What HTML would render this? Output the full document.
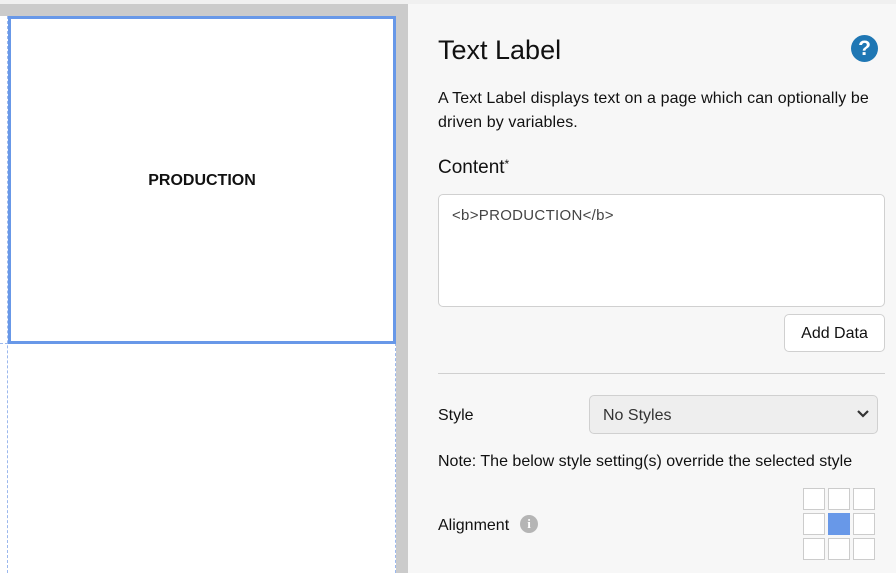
<!DOCTYPE html>
<html><head><style>
*{margin:0;padding:0;box-sizing:border-box}
body{width:896px;height:573px;overflow:hidden;background:#f7f7f7;font-family:"Liberation Sans",sans-serif;color:#111;position:relative}
.a{position:absolute}
</style></head><body>
<div class="a" style="left:0;top:0;width:896px;height:4px;background:#f0f0f0"></div>
<div class="a" style="left:0;top:4px;width:408px;height:569px;background:#cbcbcb"></div>
<div class="a" style="left:0;top:16px;width:396px;height:557px;background:#fff"></div>
<div class="a" style="left:7px;top:16px;width:1px;height:557px;border-left:1px dashed #9bb8ee"></div>
<div class="a" style="left:0;top:343px;width:396px;height:1px;border-top:1px dashed #9bb8ee"></div>
<div class="a" style="left:395px;top:343px;width:1px;height:230px;border-left:1px dashed #9bb8ee"></div>
<div class="a" style="left:8px;top:16px;width:388px;height:328px;border:3px solid #6898e8;background:#fff"></div>
<div class="a" style="left:8px;top:172px;width:388px;text-align:center;font-weight:bold;font-size:16px">PRODUCTION</div>

<div class="a" style="left:438px;top:35px;font-size:27px">Text Label</div>
<div class="a" style="left:851px;top:35px;width:27px;height:27px;border-radius:50%;background:#1f77b4;color:#fff;font-weight:bold;font-size:21px;text-align:center;line-height:27px">?</div>
<div class="a" style="left:438px;top:87px;width:445px;font-size:16px;line-height:24px;letter-spacing:0.1px">A Text Label displays text on a page which can optionally be driven by variables.</div>
<div class="a" style="left:438px;top:157px;font-size:19px">Content<span style="font-size:12px;vertical-align:top">*</span></div>
<div class="a" style="left:438px;top:194px;width:447px;height:113px;background:#fff;border:1px solid #d0d0d0;border-radius:5px;padding:12px 13px;font-size:15px;color:#444;letter-spacing:0.3px">&lt;b&gt;PRODUCTION&lt;/b&gt;</div>
<div class="a" style="left:784px;top:314px;width:101px;height:38px;background:#fff;border:1px solid #d0d0d0;border-radius:5px;text-align:center;line-height:38px;font-size:16px">Add Data</div>
<div class="a" style="left:438px;top:373px;width:447px;height:1px;background:#d0d0d0"></div>
<div class="a" style="left:438px;top:407px;font-size:16px">Style</div>
<div class="a" style="left:589px;top:395px;width:289px;height:39px;background:#eee;border:1px solid #d0d0d0;border-radius:5px;padding-left:13px;line-height:39px;font-size:16px;color:#333">No Styles
<svg class="a" style="right:7px;top:13px" width="14" height="10" viewBox="0 0 14 10"><path d="M2 2l5 5 5-5" stroke="#333" stroke-width="2.2" fill="none"/></svg></div>
<div class="a" style="left:438px;top:453px;font-size:16px">Note: The below style setting(s) override the selected style</div>
<div class="a" style="left:438px;top:517px;font-size:16px">Alignment</div>
<div class="a" style="left:520px;top:515px;width:18px;height:18px;border-radius:50%;background:#b5b5b5;color:#fff;font-weight:bold;font-size:13px;text-align:center;line-height:18px;font-family:'Liberation Serif',serif">i</div>
<div class="a" style="left:803px;top:488px;display:grid;grid-template-columns:22px 22px 22px;grid-template-rows:22px 22px 22px;gap:3px">
<div style="border:1px solid #ccc;background:#fff"></div><div style="border:1px solid #ccc;background:#fff"></div><div style="border:1px solid #ccc;background:#fff"></div>
<div style="border:1px solid #ccc;background:#fff"></div><div style="background:#6898e8"></div><div style="border:1px solid #ccc;background:#fff"></div>
<div style="border:1px solid #ccc;background:#fff"></div><div style="border:1px solid #ccc;background:#fff"></div><div style="border:1px solid #ccc;background:#fff"></div>
</div>
</body></html>
